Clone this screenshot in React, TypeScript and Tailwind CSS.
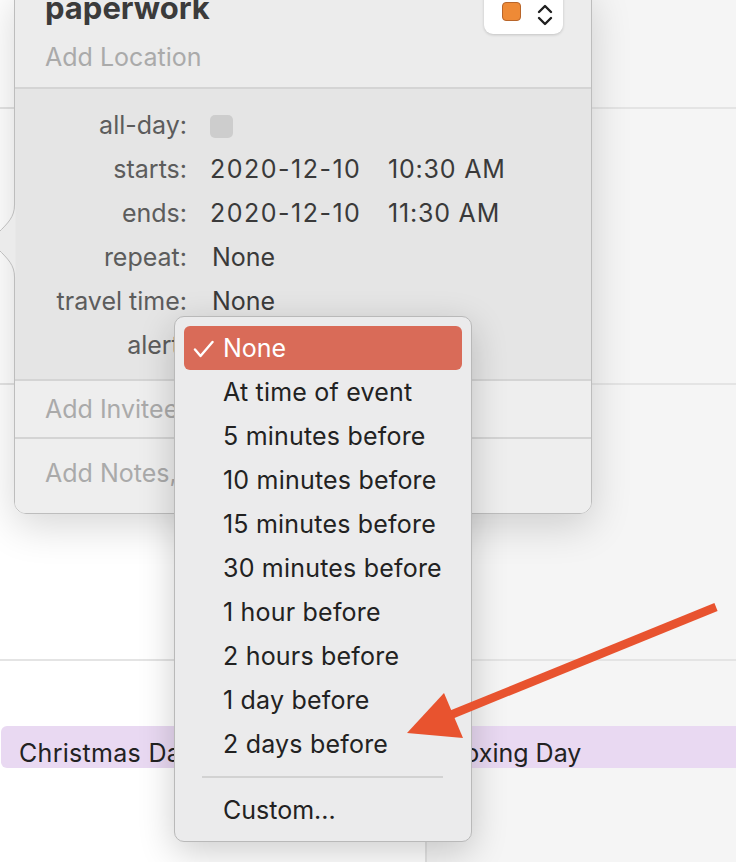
import React from 'react';

const alertOptions = [
  'None',
  'At time of event',
  '5 minutes before',
  '10 minutes before',
  '15 minutes before',
  '30 minutes before',
  '1 hour before',
  '2 hours before',
  '1 day before',
  '2 days before',
];

const DayColumn: React.FC<{ className: string; event: string; barClass: string }> = ({ className, event, barClass }) => (
  <div className={`flex flex-col ${className}`}>
    <div className="h-[109px] border-b-2 border-[#e4e4e4]" />
    <div className="h-[276px] border-b-2 border-[#e4e4e4]" />
    <div className="h-[276px] border-b-2 border-[#e4e4e4]" />
    <div className="pt-[65px]">
      <div className={`h-[42px] bg-[#e9d9f2] rounded-l-[6px] pt-[12px] text-[25px] leading-[30px] text-[#222] whitespace-nowrap ${barClass}`}>
        {event}
      </div>
    </div>
  </div>
);

const Row: React.FC<{ label: string; children: React.ReactNode }> = ({ label, children }) => (
  <div className="flex items-center h-[44px]">
    <div className="w-[172px] text-right text-[#5c5c5c]">{label}</div>
    <div className="ml-[23px] flex items-center text-[#3a3a3a]">{children}</div>
  </div>
);

export default function App() {
  return (
    <div className="relative w-[736px] h-[862px] overflow-hidden bg-white font-['Inter',sans-serif]">
      {/* calendar behind */}
      <div className="flex h-full">
        <DayColumn className="w-[425px] bg-white" event="Christmas Day" barClass="ml-[1px] mr-[4px] pl-[18px] tracking-[0.3px]" />
        <DayColumn className="flex-1 bg-[#f5f5f5] border-l-2 border-[#e4e4e4]" event="Boxing Day" barClass="ml-[5px] pl-[16px]" />
      </div>

      {/* event popover */}
      <div className="absolute left-[14px] top-[-14px] w-[578px] rounded-[12px] border border-[#bdbdbd] shadow-[0_12px_40px_rgba(0,0,0,0.16)] overflow-hidden text-[25px]">
        <div className="h-[102px] bg-[#ececec] border-b-2 border-[#d4d4d4]">
          <div className="flex items-start justify-between pl-[30px] pr-[28px]">
            <div className="pt-[3px] text-[31px] leading-[36px] font-bold text-[#3b3b3b]">paperwork</div>
            <div className="h-[47px] w-[79px] bg-white rounded-[9px] shadow-[0_1px_3px_rgba(0,0,0,0.18)] flex items-start pt-[15px] pl-[18px] gap-[16px]">
              <div className="w-[19px] h-[19px] rounded-[4px] bg-[#ee8a36] border border-[#b8652a]" />
              <svg width="16" height="22" viewBox="0 0 16 22" className="mt-[2px]">
                <path d="M2 8 L8 2 L14 8 M2 14 L8 20 L14 14" fill="none" stroke="#1f1f1f" strokeWidth="2.4" strokeLinecap="round" strokeLinejoin="round" />
              </svg>
            </div>
          </div>
          <div className="mt-[8px] pl-[30px] leading-[30px] text-[#aaaaaa]">Add Location</div>
        </div>

        <div className="h-[292px] bg-[#e5e5e5] border-b-2 border-[#d4d4d4] pt-[15px]">
          <Row label="all-day:">
            <div className="w-[23px] h-[23px] rounded-[5px] bg-[#cdcdcd]" />
          </Row>
          <Row label="starts:">
            <span className="w-[178px] tracking-[1.5px]">2020-12-10</span>
            <span className="tracking-[0.8px]">10:30 AM</span>
          </Row>
          <Row label="ends:">
            <span className="w-[178px] tracking-[1.5px]">2020-12-10</span>
            <span className="tracking-[0.8px]">11:30 AM</span>
          </Row>
          <Row label="repeat:">
            <span className="ml-[2px]">None</span>
          </Row>
          <Row label="travel time:">
            <span className="ml-[2px]">None</span>
          </Row>
          <Row label="alert:">
            <span className="ml-[2px]">None</span>
          </Row>
        </div>

        <div className="h-[58px] bg-[#eeeeee] border-b-2 border-[#d4d4d4] pt-[13px] pl-[30px] leading-[30px] text-[#aaaaaa]">
          Add Invitees
        </div>
        <div className="h-[74px] bg-[#eeeeee] pt-[19px] pl-[30px] leading-[30px] text-[#aaaaaa] whitespace-nowrap">
          Add Notes, URL, or Attachments
        </div>
      </div>

      {/* popover pointer */}
      <svg className="absolute left-0 top-[195px]" width="16" height="92" viewBox="0 0 16 92">
        <path d="M15.5 10 L14.5 10 C14.5 22 8 28 -2 38 L-2 54 C8 64 14.5 70 14.5 82 L15.5 82 Z" fill="#ebebeb" />
        <path d="M14.5 10 C14.5 22 8 28 -2 38 M-2 54 C8 64 14.5 70 14.5 82" fill="none" stroke="#bdbdbd" strokeWidth="1" />
      </svg>

      {/* alert menu */}
      <div className="absolute left-[174px] top-[316px] w-[298px] h-[526px] rounded-[10px] bg-[#ebebec] border border-[#b9b9b9] shadow-[0_10px_36px_rgba(0,0,0,0.2)] pt-[9px] px-[9px] text-[25px] text-[#222]">
        {alertOptions.map((opt, i) =>
          i === 0 ? (
            <div key={opt} className="h-[44px] flex items-center pl-[9px] pt-[2px] rounded-[6px] bg-[#d96b58] text-white">
              <svg width="21" height="18" viewBox="0 0 21 18" className="mr-[9px]">
                <path d="M2 9.5 L7.5 16 L19.5 2" fill="none" stroke="#ffffff" strokeWidth="2.4" strokeLinecap="round" strokeLinejoin="round" />
              </svg>
              {opt}
            </div>
          ) : (
            <div key={opt} className="h-[44px] flex items-center pl-[39px] pt-[2px] whitespace-nowrap tracking-[0.2px]">
              {opt}
            </div>
          )
        )}
        <div className="h-[22px] flex items-center pl-[18px] pr-[19px]">
          <div className="h-[2px] w-full bg-[#d2d2d2]" />
        </div>
        <div className="h-[44px] flex items-center pl-[39px] pt-[2px]">Custom...</div>
      </div>

      {/* annotation arrow */}
      <svg className="absolute left-0 top-0 pointer-events-none" width="736" height="862" viewBox="0 0 736 862">
        <line x1="716" y1="607" x2="448" y2="716" stroke="#e8532f" strokeWidth="8.5" />
        <polygon points="407,733 444,693 463,738" fill="#e8532f" />
      </svg>
    </div>
  );
}
